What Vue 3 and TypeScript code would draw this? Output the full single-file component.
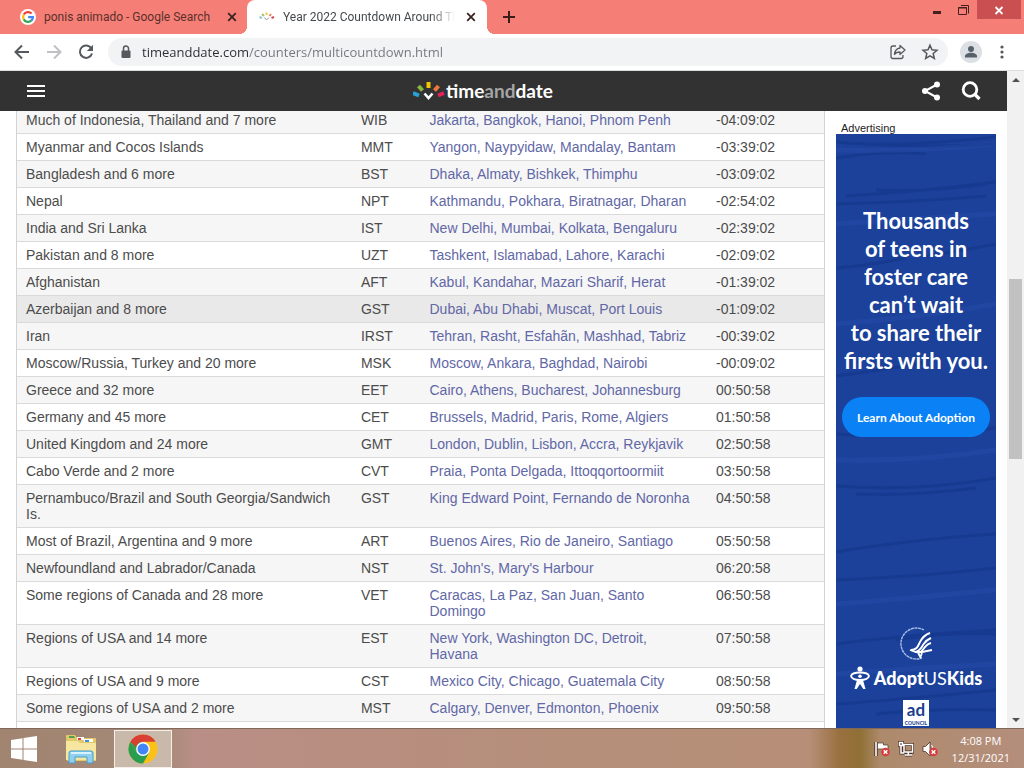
<script setup lang="ts">
interface Zone {
  place: string
  code: string
  cities: string
  left: string
  hover?: boolean
}

const zones: Zone[] = [
  { place: 'Much of Indonesia, Thailand and 7 more', code: 'WIB', cities: 'Jakarta, Bangkok, Hanoi, Phnom Penh', left: '-04:09:02' },
  { place: 'Myanmar and Cocos Islands', code: 'MMT', cities: 'Yangon, Naypyidaw, Mandalay, Bantam', left: '-03:39:02' },
  { place: 'Bangladesh and 6 more', code: 'BST', cities: 'Dhaka, Almaty, Bishkek, Thimphu', left: '-03:09:02' },
  { place: 'Nepal', code: 'NPT', cities: 'Kathmandu, Pokhara, Biratnagar, Dharan', left: '-02:54:02' },
  { place: 'India and Sri Lanka', code: 'IST', cities: 'New Delhi, Mumbai, Kolkata, Bengaluru', left: '-02:39:02' },
  { place: 'Pakistan and 8 more', code: 'UZT', cities: 'Tashkent, Islamabad, Lahore, Karachi', left: '-02:09:02' },
  { place: 'Afghanistan', code: 'AFT', cities: 'Kabul, Kandahar, Mazari Sharif, Herat', left: '-01:39:02' },
  { place: 'Azerbaijan and 8 more', code: 'GST', cities: 'Dubai, Abu Dhabi, Muscat, Port Louis', left: '-01:09:02', hover: true },
  { place: 'Iran', code: 'IRST', cities: 'Tehran, Rasht, Esfahãn, Mashhad, Tabriz', left: '-00:39:02' },
  { place: 'Moscow/Russia, Turkey and 20 more', code: 'MSK', cities: 'Moscow, Ankara, Baghdad, Nairobi', left: '-00:09:02' },
  { place: 'Greece and 32 more', code: 'EET', cities: 'Cairo, Athens, Bucharest, Johannesburg', left: '00:50:58' },
  { place: 'Germany and 45 more', code: 'CET', cities: 'Brussels, Madrid, Paris, Rome, Algiers', left: '01:50:58' },
  { place: 'United Kingdom and 24 more', code: 'GMT', cities: 'London, Dublin, Lisbon, Accra, Reykjavik', left: '02:50:58' },
  { place: 'Cabo Verde and 2 more', code: 'CVT', cities: 'Praia, Ponta Delgada, Ittoqqortoormiit', left: '03:50:58' },
  { place: 'Pernambuco/Brazil and South Georgia/Sandwich Is.', code: 'GST', cities: 'King Edward Point, Fernando de Noronha', left: '04:50:58' },
  { place: 'Most of Brazil, Argentina and 9 more', code: 'ART', cities: 'Buenos Aires, Rio de Janeiro, Santiago', left: '05:50:58' },
  { place: 'Newfoundland and Labrador/Canada', code: 'NST', cities: "St. John's, Mary's Harbour", left: '06:20:58' },
  { place: 'Some regions of Canada and 28 more', code: 'VET', cities: 'Caracas, La Paz, San Juan, Santo Domingo', left: '06:50:58' },
  { place: 'Regions of USA and 14 more', code: 'EST', cities: 'New York, Washington DC, Detroit, Havana', left: '07:50:58' },
  { place: 'Regions of USA and 9 more', code: 'CST', cities: 'Mexico City, Chicago, Guatemala City', left: '08:50:58' },
  { place: 'Some regions of USA and 2 more', code: 'MST', cities: 'Calgary, Denver, Edmonton, Phoenix', left: '09:50:58' },
]

const headline: string[] = ['Thousands', 'of teens in', 'foster care', 'can’t wait', 'to share their', 'firsts with you.']
</script>

<template>
  <div class="desktop">
    <div class="tabstrip">
      <div class="tab">
        <svg class="favicon" viewBox="0 0 16 16" aria-hidden="true">
          <circle cx="8" cy="8" r="8" fill="#fff" />
          <g fill="none" stroke-width="2.2">
            <path d="M11.6 4.6A4.9 4.9 0 0 0 3.7 5.6" stroke="#ea4335" />
            <path d="M3.8 5.5a4.9 4.9 0 0 0 0 5" stroke="#fbbc05" />
            <path d="M3.7 10.4a4.9 4.9 0 0 0 7.7 1.1" stroke="#34a853" />
            <path d="M11.2 11.7A4.9 4.9 0 0 0 12.9 8.2H8.2" stroke="#4285f4" />
          </g>
        </svg>
        <button class="tab-title">ponis animado - Google Search</button>
        <button class="tab-close" aria-label="Close tab">
          <svg viewBox="0 0 16 16"><path d="M4.2 4.2l7.6 7.6M11.8 4.2l-7.6 7.6" /></svg>
        </button>
      </div>
      <div class="tab active">
        <svg class="favicon" viewBox="0 0 32 22" aria-hidden="true">
          <g stroke-width="4">
            <path d="M1 11l5 2" stroke="#8cc5e0" />
            <path d="M6 5l4 4" stroke="#a5c26a" />
            <path d="M15 2v5" stroke="#f3c64a" />
            <path d="M24 5l-3 4" stroke="#e2895a" />
            <path d="M30 11l-5 2" stroke="#d84a5a" />
          </g>
          <path d="M11 12l4 5 5-5" fill="none" stroke="#999" stroke-width="2" />
        </svg>
        <button class="tab-title fade">Year 2022 Countdown Around The World</button>
        <button class="tab-close" aria-label="Close tab">
          <svg viewBox="0 0 16 16"><path d="M4.2 4.2l7.6 7.6M11.8 4.2l-7.6 7.6" /></svg>
        </button>
      </div>
      <button class="new-tab" aria-label="New tab">
        <svg viewBox="0 0 16 16"><path d="M8 2v12M2 8h12" /></svg>
      </button>
      <div class="window-controls">
        <button aria-label="Minimize"><svg viewBox="0 0 16 16"><path d="M4 10.5h8" stroke-width="3" /></svg></button>
        <button aria-label="Restore"><svg viewBox="0 0 16 16"><path d="M2.5 5.5h8v7h-8zM2 6h9M5 3.500h7.500v8" /></svg></button>
        <button class="win-close" aria-label="Close"><svg viewBox="0 0 16 16"><path d="M4.500 5l7 7M11.500 5l-7 7" stroke-width="1.800" /></svg></button>
      </div>
    </div>

    <div class="toolbar">
      <button class="tool" aria-label="Back">
        <svg viewBox="0 0 20 20"><path d="M17 10H4M10 3.500L3.500 10l6.500 6.500" fill="none" stroke="#55585c" stroke-width="2" /></svg>
      </button>
      <button class="tool" aria-label="Forward">
        <svg viewBox="0 0 20 20"><path d="M3 10h13M10 3.500l6.500 6.500-6.500 6.500" fill="none" stroke="#bfc1c4" stroke-width="2" /></svg>
      </button>
      <button class="tool" aria-label="Reload">
        <svg viewBox="0 0 20 20">
          <path d="M15.300 6.300A6.200 6.200 0 1 0 16 11.500" fill="none" stroke="#55585c" stroke-width="2" />
          <path d="M17 2.800v6.200h-6.200z" fill="#55585c" />
        </svg>
      </button>
      <div class="omnibox">
        <svg class="lock" viewBox="0 0 16 16" aria-hidden="true">
          <rect x="3.500" y="6.500" width="9" height="7.500" rx="1" fill="#55585c" />
          <path d="M5.500 7V4.500a2.500 2.500 0 0 1 5 0V7" fill="none" stroke="#55585c" stroke-width="1.500" />
        </svg>
        <input class="url" type="text" aria-label="Address" value="timeanddate.com/counters/multicountdown.html" />
        <button class="tool" aria-label="Share this page">
          <svg viewBox="0 0 20 20" fill="none" stroke="#55585c" stroke-width="1.300">
            <path d="M8 4H5a2 2 0 0 0-2 2v8.500a2 2 0 0 0 2 2h8a2 2 0 0 0 2-2V13" />
            <path d="M12 3.500l5 4.500-5 4.500V10c-3 0-4.500.800-5.500 2.500.300-3.500 2-6 5.500-6.500z" stroke-linejoin="round" />
          </svg>
        </button>
        <button class="tool" aria-label="Bookmark this page">
          <svg viewBox="0 0 20 20"><path d="M10 3.200l2 4.600 5 .450-3.800 3.300 1.150 4.950L10 13.900 5.650 16.500 6.800 11.550 3 8.250l5-.450z" fill="none" stroke="#55585c" stroke-width="1.500" /></svg>
        </button>
      </div>
      <button class="avatar" aria-label="Profile">
        <svg viewBox="0 0 22 22"><circle cx="11" cy="8" r="3" /><path d="M5 16.500v-1.500c0-2 3-3.300 6-3.300s6 1.300 6 3.300v1.500z" /></svg>
      </button>
      <button class="menu" aria-label="Menu">
        <svg viewBox="0 0 16 20" fill="#55585c"><circle cx="8" cy="5" r="1.600" /><circle cx="8" cy="10" r="1.600" /><circle cx="8" cy="15" r="1.600" /></svg>
      </button>
    </div>

    <div class="viewport">
      <div class="page">
        <header class="site-header">
          <button class="burger" aria-label="Open menu">
            <svg viewBox="0 0 18 14"><path d="M0 2h18M0 7h18M0 12h18" stroke="#fff" stroke-width="2" /></svg>
          </button>
          <a class="brand" href="#">
            <svg viewBox="0 0 32 20" aria-hidden="true">
              <g stroke-width="4">
                <path d="M0 12l6 2.500" stroke="#28a3d8" />
                <path d="M5.500 5l4 4.500" stroke="#8bb93c" />
                <path d="M15.500 1v6" stroke="#f6c400" />
                <path d="M25.500 5l-4 4.500" stroke="#ee7a3a" />
                <path d="M31 12l-6 2.500" stroke="#e5215c" />
              </g>
              <path d="M11.500 12.500l4 4.500 4-4.500" fill="none" stroke="#fff" stroke-width="2.600" />
            </svg>
            <span class="wordmark">time<span class="and">and</span>date</span>
          </a>
          <div class="header-actions">
            <button aria-label="Share">
              <svg viewBox="0 0 20 20"><g fill="#fff"><circle cx="4" cy="10" r="3" /><circle cx="16" cy="3.500" r="3" /><circle cx="16" cy="16.500" r="3" /></g><path d="M16 3.500L4 10l12 6.500" fill="none" stroke="#fff" stroke-width="2" /></svg>
            </button>
            <button aria-label="Search">
              <svg viewBox="0 0 20 20" fill="none" stroke="#fff"><circle cx="9" cy="8.500" r="6.800" stroke-width="2.800" /><path d="M13.500 13l5 5" stroke-width="3.200" /></svg>
            </button>
          </div>
        </header>

        <main class="content">
          <div class="table-frame">
            <table class="zones">
              <colgroup>
                <col class="c-place" /><col class="c-code" /><col class="c-cities" /><col />
              </colgroup>
              <tbody>
                <tr v-for="z in zones" :key="z.place" :class="{ hover: z.hover }">
                  <td>{{ z.place }}</td>
                  <td>{{ z.code }}</td>
                  <td><a href="#">{{ z.cities }}</a></td>
                  <td>{{ z.left }}</td>
                </tr>
              </tbody>
            </table>
          </div>

          <aside class="side">
            <p class="ad-label">Advertising</p>
            <div class="ad">
              <svg class="grain" viewBox="0 0 160 600" preserveAspectRatio="none" aria-hidden="true">
                <g fill="none" stroke="#0e2c78" stroke-opacity=".3" stroke-width="3">
                  <path d="M0 8q60 6 160-5M30 10q80 4 130 0M0 24q50-8 90-4" />
                  <path d="M10 62q70-4 150-14M0 70q80-2 150-8M40 56q60 2 110-6" />
                  <path d="M0 134q30-2 70-10M90 122q40-6 70-12M0 242q50-6 90-14" />
                  <path d="M0 300q60 5 160-6M0 352q80 6 160-8M20 360q60 2 120-6" />
                  <path d="M0 418q70-12 160-18M0 446q80-3 160-12" />
                  <path d="M0 510q60-8 160-14M60 506q50-8 100-6M0 570q60-4 160-14M40 580q60-6 120-4" />
                </g>
                <g fill="none" stroke="#3159b5" stroke-opacity=".25" stroke-width="5">
                  <path d="M0 16q80 2 160-6M0 90q80-6 160-10M0 190q80-6 160-20M0 326q80 2 160-10M0 470q80-6 160-14M0 540q80-6 160-10" />
                </g>
              </svg>
              <p class="headline"><span v-for="line in headline" :key="line">{{ line }}</span></p>
              <button class="cta">Learn About Adoption</button>
              <svg class="seal" viewBox="0 0 36 36" fill="none" stroke="#fff" aria-hidden="true">
                <path d="M26 4A15.500 15.500 0 1 0 24 32" stroke="#a9bbe8" stroke-width="1.400" stroke-dasharray="3 .5" />
                <path d="M13 24c6 0 7-4 9-8s4-7 10-9M17 26c5-1 6-4 8-7s3-5 8-7M21 27c4-2 4-4 6-6s2-3 6-4" stroke-width="1.900" />
                <path d="M12 24l6 2 6 0 10-2M20 27l3 5M24 27l-2 5" stroke-width="1.800" />
              </svg>
              <div class="adopt">
                <svg viewBox="0 0 20 24" fill="none" stroke="#fff" aria-hidden="true">
                  <circle cx="10" cy="3" r="2.600" fill="#fff" stroke="none" />
                  <path d="M1 10q1-3.500 9-3.500T19 10q-1 4-9 4T1 10z" stroke-width="1.800" />
                  <circle cx="10" cy="10.200" r="1.800" fill="#fff" stroke="none" />
                  <path d="M7 14h6l2.500 9h-2.200L10 18l-3.300 5H4.500z" fill="#fff" stroke="none" />
                </svg>
                <span class="adopt-name">Adopt<span class="us">US</span>Kids</span>
              </div>
              <div class="council"><b>ad</b><small>COUNCIL</small></div>
            </div>
          </aside>
        </main>
      </div>

      <div class="scrollbar" aria-hidden="true">
        <svg viewBox="0 0 17 17"><path d="M5 11h8l-4-4z" fill="#505050" /></svg>
        <div class="track"><div class="gap-before"></div><div class="thumb"></div><div class="gap-after"></div></div>
        <svg viewBox="0 0 17 17"><path d="M5 7h8l-4 4z" fill="#505050" /></svg>
      </div>
    </div>

    <footer class="taskbar">
      <button class="start" aria-label="Start">
        <svg viewBox="0 0 26 26"><path d="M0 4l11.500-1.700v10.300H0zM12.500 2.100L26 0v12.600H12.500zM0 13.400h11.500v10.400L0 22zM12.500 13.400H26V26l-13.500-2z" fill="#fff" /></svg>
      </button>
      <button class="explorer" aria-label="File Explorer">
        <svg viewBox="0 0 32 30">
          <path d="M1 2q0-1 1-1h8l2 3h18q1 0 1 1v22H2z" fill="#e3c869" />
          <path d="M4 2h5l1 2H4z" fill="#4fa050" /><path d="M12 3h7v3h-7z" fill="#fff" /><path d="M13 4h3v2h-3z" fill="#d9473a" />
          <path d="M19 5h9v3h-9z" fill="#fff" /><path d="M20 6h4v2h-4z" fill="#3e93d6" />
          <path d="M1 7h12l2 2h16v17H1z" fill="#f6e6a0" />
          <path d="M4 29V19q0-2 2-2h20q2 0 2 2v10h-6v-6H10v6z" fill="#8fd0ef" stroke="#459fd2" />
          <path d="M6 19h20" stroke="#d8f2ff" stroke-width="2" />
        </svg>
      </button>
      <button class="chrome" aria-label="Google Chrome">
        <svg viewBox="0 0 30 30">
          <circle cx="15" cy="15" r="14.500" fill="#fbc116" />
          <path d="M2.440 7.750A14.500 14.500 0 0 0 15 29.500l6.200-11L15 15 8.900 18.500z" fill="#2a9d4f" />
          <path d="M2.440 7.750L9 18.500 15 15V8z" fill="#2a9d4f" />
          <path d="M2.440 7.750A14.500 14.500 0 0 1 27.560 7.750H15A7 7 0 0 0 8.200 13z" fill="#da3f34" />
          <circle cx="15" cy="15" r="6.900" fill="#fff" /><circle cx="15" cy="15" r="5.500" fill="#4285f4" />
        </svg>
      </button>
      <div class="tray">
        <svg viewBox="0 0 16 16" aria-label="Action Center">
          <path d="M2 1v14" stroke="#4b332a" stroke-width="3.400" /><path d="M2 1v14" stroke="#fff" stroke-width="1.600" />
          <path d="M3.500 2h6v2h4.500v6h-5V8H3.500z" fill="#fff" stroke="#4b332a" stroke-width=".7" />
          <circle cx="11.500" cy="11" r="4.300" fill="#d63c3c" /><path d="M9.700 9.200l3.600 3.600M13.300 9.200l-3.600 3.600" stroke="#fff" stroke-width="1.500" />
        </svg>
        <svg viewBox="0 0 16 16" aria-label="Network" fill="none">
          <g stroke="#4b332a" stroke-width="3"><path d="M6 3.500h8.500v7.500H6zM10.300 11v3M7 14h7M1.500 1.500h3v3h-3zM3 5v7h3" /></g>
          <g stroke="#fff" stroke-width="1.500"><path d="M6 3.500h8.500v7.500H6zM10.300 11v3M7 14h7M1.500 1.500h3v3h-3zM3 5v7h3" /></g>
        </svg>
        <svg viewBox="0 0 16 16" aria-label="Volume muted">
          <path d="M1 5.500h2.500L8 1v14l-4.500-4.500H1z" fill="#fff" stroke="#4b332a" stroke-width=".8" />
          <path d="M9.500 4q2 2 1 5" stroke="#fff" fill="none" />
          <circle cx="11.500" cy="11" r="4.300" fill="#d63c3c" /><path d="M9.700 9.200l3.600 3.600M13.300 9.200l-3.600 3.600" stroke="#fff" stroke-width="1.500" />
        </svg>
        <div class="clock"><span>4:08 PM</span><span>12/31/2021</span></div>
      </div>
    </footer>
  </div>
</template>

<style>
body {
  margin: 0;
}
</style>

<style scoped>
.desktop {
  display: flex;
  flex-direction: column;
  height: 100vh;
  overflow: hidden;
  font-family: "Liberation Sans", Arial, sans-serif;
}
.desktop * {
  box-sizing: border-box;
}
button {
  padding: 0;
  border: 0;
  background: none;
  font: inherit;
  color: inherit;
}
svg {
  display: block;
  flex: none;
}
p {
  margin: 0;
}

/* tab strip */
.tabstrip {
  display: flex;
  flex: none;
  height: 34px;
  background: #f57f76;
  font-family: Roboto, "Noto Sans", sans-serif;
  font-size: 12px;
}
.tab {
  display: flex;
  align-items: center;
  gap: 8px;
  width: 247px;
  padding: 0 7px 0 20px;
  color: #5b2f2c;
}
.tab.active {
  position: relative;
  width: 240px;
  padding: 0 8px 0 12px;
  border-radius: 8px 8px 0 0;
  background: #fff;
  color: #45494d;
}
.tab.active::before,
.tab.active::after {
  content: "";
  position: absolute;
  bottom: 0;
  width: 8px;
  height: 8px;
}
.tab.active::before {
  left: -8px;
  background: radial-gradient(circle at 0 0, transparent 8px, #fff 8px);
}
.tab.active::after {
  right: -8px;
  background: radial-gradient(circle at 100% 0, transparent 8px, #fff 8px);
}
.favicon {
  width: 16px;
  height: 16px;
}
.tab-title {
  flex: 1;
  min-width: 0;
  overflow: hidden;
  text-align: left;
  white-space: nowrap;
}
.tab-title.fade {
  mask-image: linear-gradient(90deg, #000 86%, transparent 100%);
}
.tab-close,
.tab-close svg {
  width: 16px;
  height: 16px;
}
.tab-close svg {
  fill: none;
  stroke: #3a2423;
  stroke-width: 1.8;
}
.new-tab {
  display: grid;
  place-items: center;
  width: 44px;
}
.new-tab svg {
  width: 16px;
  height: 16px;
  fill: none;
  stroke: #3a1d1b;
  stroke-width: 2;
}
.window-controls {
  display: flex;
  align-items: flex-start;
  margin-left: auto;
  padding-right: 3px;
}
.window-controls button {
  display: grid;
  place-items: center;
  width: 27px;
  height: 19px;
}
.window-controls svg {
  width: 16px;
  height: 16px;
  fill: none;
  stroke: #43201d;
}
.window-controls .win-close {
  width: 44px;
  background: #c94f50;
}
.window-controls .win-close svg {
  stroke: #fff;
}

/* toolbar */
.toolbar {
  display: flex;
  flex: none;
  align-items: center;
  gap: 12px;
  height: 37px;
  padding: 0 14px 0 12px;
  border-bottom: 1px solid #dcdedd;
  background: #fff;
}
.tool,
.tool svg {
  width: 20px;
  height: 20px;
}
.omnibox {
  display: flex;
  flex: 1;
  align-items: center;
  gap: 12px;
  height: 28px;
  padding: 0 8px 0 10px;
  border-radius: 14px;
  background: #f1f3f4;
}
.lock {
  width: 16px;
  height: 16px;
  margin-right: -4px;
}
.url {
  flex: 1;
  min-width: 0;
  padding: 0;
  border: 0;
  outline: 0;
  background: linear-gradient(90deg, #2b2d30 107px, #73777b 107px) text;
  color: #2b2d30;
  -webkit-text-fill-color: transparent;
  font: 13px/20px "Open Sans", "Noto Sans", sans-serif;
}
.avatar {
  width: 22px;
  height: 22px;
  border-radius: 50%;
  background: #dce0e5;
}
.avatar svg {
  width: 22px;
  height: 22px;
  fill: #56616c;
}
.menu svg {
  width: 16px;
  height: 20px;
}

/* page */
.viewport {
  display: flex;
  flex: 1;
  min-height: 0;
}
.page {
  display: flex;
  flex: 1;
  flex-direction: column;
  min-width: 0;
  background: #fff;
}
.site-header {
  display: flex;
  flex: none;
  align-items: center;
  justify-content: space-between;
  height: 40px;
  padding: 0 26px 0 27px;
  background: #323232;
}
.burger svg {
  width: 18px;
  height: 14px;
}
.brand {
  display: flex;
  align-items: center;
  gap: 1px;
  color: #fff;
  text-decoration: none;
}
.brand svg {
  width: 32px;
  height: 20px;
}
.wordmark {
  font: 700 19px/24px Lato, sans-serif;
}
.and {
  color: #a5a5a5;
}
.header-actions {
  display: flex;
  gap: 20px;
}
.header-actions svg {
  width: 20px;
  height: 20px;
}
.content {
  display: grid;
  flex: 1;
  grid-template-columns: 1fr 160px;
  gap: 11px;
  min-height: 0;
  padding: 0 11px 0 16px;
  overflow: hidden;
}
.table-frame {
  min-height: 0;
  overflow: hidden;
  border: solid #d3d3d3;
  border-width: 0 1px;
}
.zones {
  width: 100%;
  margin-top: -4px;
  border-collapse: separate;
  border-spacing: 0;
  table-layout: fixed;
  color: #4c4c4c;
  font-size: 14px;
  line-height: 16px;
}
.c-place {
  width: 41.5%;
}
.c-code {
  width: 8.5%;
}
.c-cities {
  width: 35.5%;
}
.zones td {
  padding: 5px 9px;
  border-bottom: 1px solid #dadada;
  vertical-align: top;
}
.zones tr:nth-child(odd) {
  background: #f6f6f6;
}
.zones tr.hover {
  background: #e9e9e9;
}
.zones a {
  color: #6267a6;
  text-decoration: none;
}

/* advertisement */
.side {
  min-height: 0;
}
.ad-label {
  padding: 11px 5px 0;
  color: #222;
  font-size: 11px;
  line-height: 12px;
}
.ad {
  position: relative;
  display: flex;
  flex-direction: column;
  align-items: center;
  min-height: 600px;
  padding: 73px 0 8px;
  background: #1b419b;
  color: #fff;
  font-family: Lato, sans-serif;
}
.grain {
  position: absolute;
  inset: 0;
  width: 100%;
  height: 100%;
}
.headline,
.cta,
.seal,
.adopt,
.council {
  position: relative;
}
.headline {
  font-size: 22px;
  font-weight: 700;
  line-height: 28px;
  text-align: center;
  white-space: nowrap;
}
.headline span {
  display: block;
}
.cta {
  width: 148px;
  height: 40px;
  margin-top: 22px;
  border-radius: 20px;
  background: #0a82f5;
  font-size: 12px;
  font-weight: 700;
}
.seal {
  width: 36px;
  height: 36px;
  margin-top: auto;
}
.adopt {
  display: flex;
  align-items: center;
  gap: 4px;
  margin-top: 4px;
}
.adopt svg {
  width: 20px;
  height: 24px;
}
.adopt-name {
  font-size: 18px;
  font-weight: 900;
  line-height: 24px;
}
.us {
  font-weight: 400;
}
.council {
  display: flex;
  flex-direction: column;
  align-items: center;
  width: 26px;
  height: 26px;
  margin-top: 10px;
  background: #fff;
  color: #1b3f8f;
}
.council b {
  font-size: 17px;
  line-height: 20px;
}
.council small {
  font-size: 5px;
  font-weight: 900;
  line-height: 6px;
}

/* scrollbar */
.scrollbar {
  display: flex;
  flex-direction: column;
  width: 17px;
  background: #f1f1f1;
}
.scrollbar svg {
  width: 17px;
  height: 17px;
}
.track {
  display: flex;
  flex: 1;
  flex-direction: column;
  padding: 0 2px;
}
.gap-before {
  flex: 191;
}
.thumb {
  flex: 180;
  background: #c1c1c1;
}
.gap-after {
  flex: 252;
}

/* taskbar */
.taskbar {
  display: flex;
  flex: none;
  align-items: center;
  height: 40px;
  padding: 0 14px 0 11px;
  border-top: 1px solid #80695a;
  background: linear-gradient(90deg, #a08470 0%, #a58a78 16%, #b98e86 19%, #b88e80 35%, #b58f79 60%, #b78f79 79%, #9a7040 82%, #8f7035 84%, #ae8a6c 86%, #b48e7c 100%);
}
.start svg {
  width: 26px;
  height: 26px;
}
.explorer {
  margin: 0 17px 0 28px;
}
.explorer svg {
  width: 32px;
  height: 30px;
}
.chrome {
  display: grid;
  place-items: center;
  width: 58px;
  height: 38px;
  border: 1px solid #f6eee8;
  background: #c9b9ab;
}
.chrome svg {
  width: 30px;
  height: 30px;
}
.tray {
  display: flex;
  align-items: center;
  gap: 8px;
  margin-left: auto;
}
.tray svg {
  width: 16px;
  height: 16px;
}
.clock {
  display: flex;
  flex-direction: column;
  align-items: center;
  margin-left: 6px;
  color: #fff;
  font: 11px/17px "Open Sans", "Noto Sans", sans-serif;
}
</style>
